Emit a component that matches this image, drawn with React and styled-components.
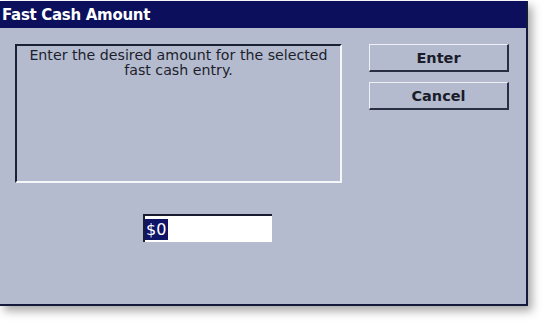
import React from "react";
import styled, { createGlobalStyle } from "styled-components";

const Global = createGlobalStyle`
  body {
    margin: 0;
    background: #ffffff;
    font-family: "DejaVu Sans", Tahoma, sans-serif;
  }
`;

export default function App() {
  return (
    <>
      <Global />
      <Page>
        <Window>
          <TitleBar>Fast Cash Amount</TitleBar>
          <Body>
            <TopRow>
              <MessageBox>
                Enter the desired amount for the selected
                <br />
                fast cash entry.
              </MessageBox>
              <Buttons>
                <Button>Enter</Button>
                <Button>Cancel</Button>
              </Buttons>
            </TopRow>
            <AmountField>
              <Selected>$0</Selected>
            </AmountField>
          </Body>
        </Window>
      </Page>
    </>
  );
}

const Page = styled.div`
  width: 544px;
  height: 324px;
  padding-top: 1px;
  box-sizing: border-box;
  overflow: hidden;
`;

const Window = styled.div`
  width: 528px;
  height: 305px;
  box-sizing: border-box;
  display: flex;
  flex-direction: column;
  background: #b4bbcf;
  border-right: 2px solid #141a3c;
  border-bottom: 2px solid #141a3c;
  box-shadow: 4px 5px 9px rgba(0, 0, 0, 0.35);
`;

const TitleBar = styled.div`
  height: 27px;
  flex-shrink: 0;
  display: flex;
  align-items: center;
  padding-left: 2px;
  background: #0b0f5c;
  color: #ffffff;
  font-weight: bold;
  font-size: 15px;
  letter-spacing: -0.3px;
`;

const Body = styled.div`
  flex: 1;
  padding: 16px 0 0 15px;
  display: flex;
  flex-direction: column;
`;

const TopRow = styled.div`
  display: flex;
  align-items: flex-start;
  gap: 27px;
`;

const MessageBox = styled.div`
  width: 327px;
  height: 139px;
  box-sizing: border-box;
  border-top: 2px solid #1c2036;
  border-left: 2px solid #1c2036;
  border-right: 2px solid #f4f6fa;
  border-bottom: 2px solid #f4f6fa;
  padding-top: 2px;
  text-align: center;
  font-size: 14.2px;
  line-height: 15px;
  color: #1c1e2c;
`;

const Buttons = styled.div`
  display: flex;
  flex-direction: column;
  gap: 10px;
`;

const Button = styled.button`
  width: 140px;
  height: 28px;
  box-sizing: border-box;
  background: #b4bbcf;
  border-top: 1px solid #eef0f6;
  border-left: 1px solid #eef0f6;
  border-right: 2px solid #2a2e44;
  border-bottom: 2px solid #2a2e44;
  font-family: "DejaVu Sans", Tahoma, sans-serif;
  font-weight: bold;
  font-size: 14.5px;
  color: #1a1c2a;
  padding: 0;
`;

const AmountField = styled.div`
  margin: 31px 0 0 128px;
  width: 129px;
  height: 28px;
  box-sizing: border-box;
  background: #ffffff;
  border-top: 2px solid #1a1c30;
  border-left: 2px solid #1a1c30;
  display: flex;
  align-items: center;
  padding-left: 0;
`;

const Selected = styled.span`
  background: #0f1466;
  color: #ffffff;
  font-size: 16px;
  line-height: 21px;
  padding: 0 2px 0 1px;
`;
